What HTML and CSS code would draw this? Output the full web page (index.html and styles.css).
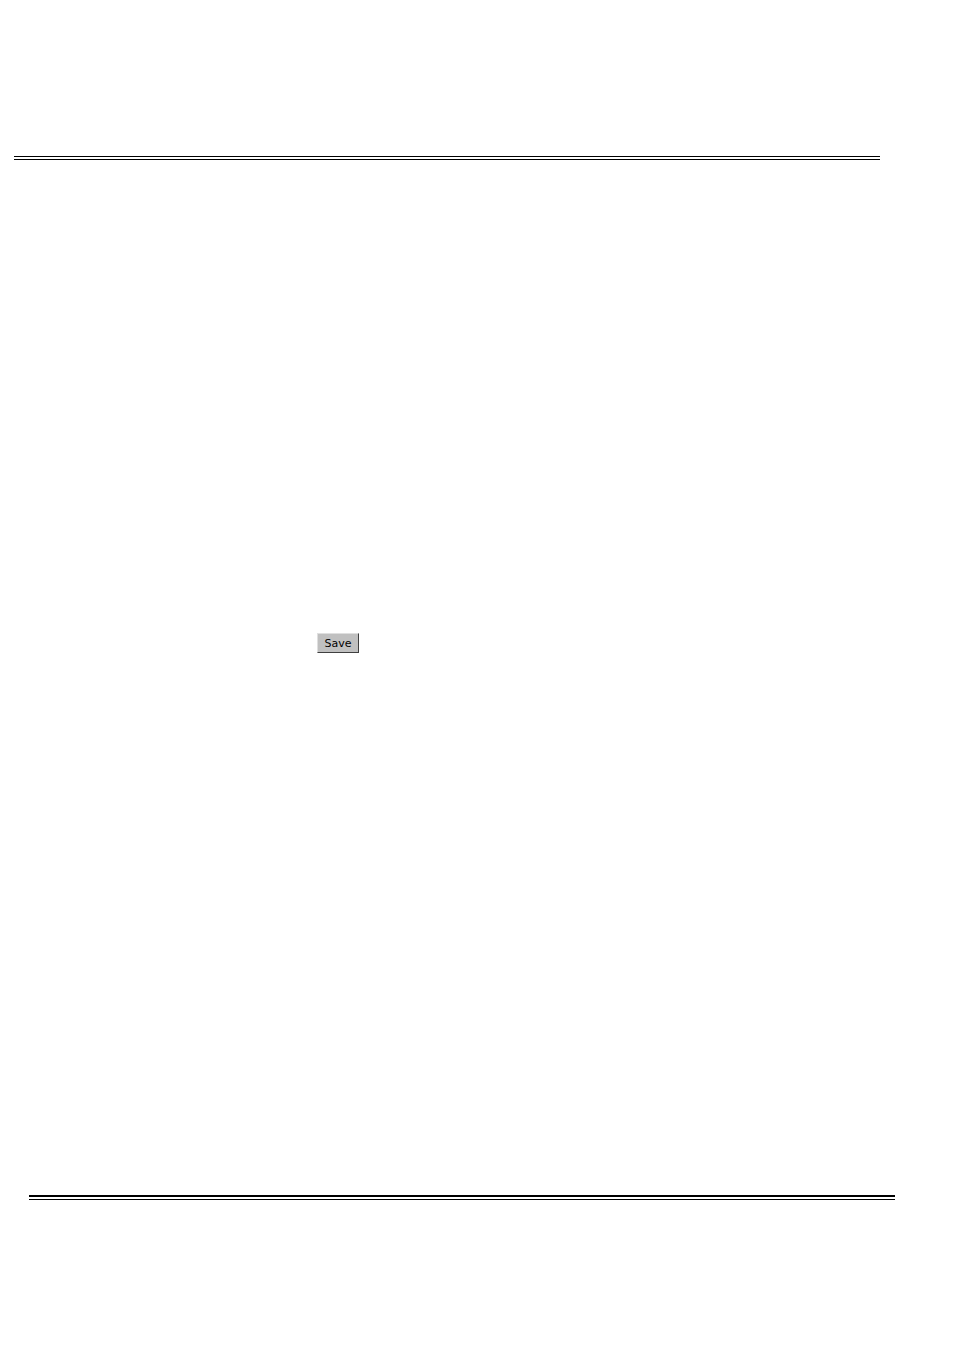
FILE: index.html
```html
<!DOCTYPE html>
<html lang="en">
<head>
    <meta charset="UTF-8">
    <meta name="viewport" content="width=device-width, initial-scale=1.0">
    <title>Save</title>
    <link rel="stylesheet" href="styles.css">
</head>
<body>
    <header class="page-header"></header>

    <main class="content">
        <button type="button" class="save-button">Save</button>
    </main>

    <footer class="page-footer"></footer>
</body>
</html>
```

FILE: styles.css
```css
* {
    box-sizing: border-box;
}

body {
    margin: 0;
    min-height: 100vh;
    display: flex;
    flex-direction: column;
    background-color: white;
}

/* thin double rule under the header */
.page-header {
    margin: 156px 74px 0 14px;
    height: 4px;
    border-top: 1px solid black;
    border-bottom: 1px solid black;
}

.content {
    flex: 1;
    padding: 473px 20px 20px 317px;
}

.save-button {
    display: block;
    min-width: 42px;
    height: 20px;
    padding: 1px 6px 0;
    border: 1px solid;
    border-color: #dfdfdf #404040 #404040 #dfdfdf;
    border-radius: 0;
    background-color: #c0c0c0;
    color: black;
    font-family: Verdana, "DejaVu Sans", sans-serif;
    font-size: 11px;
    line-height: 17px;
}

/* heavier double rule above the footer */
.page-footer {
    margin: 0 59px 150px 29px;
    height: 5px;
    border-top: 2px solid black;
    border-bottom: 1px solid black;
}
```
